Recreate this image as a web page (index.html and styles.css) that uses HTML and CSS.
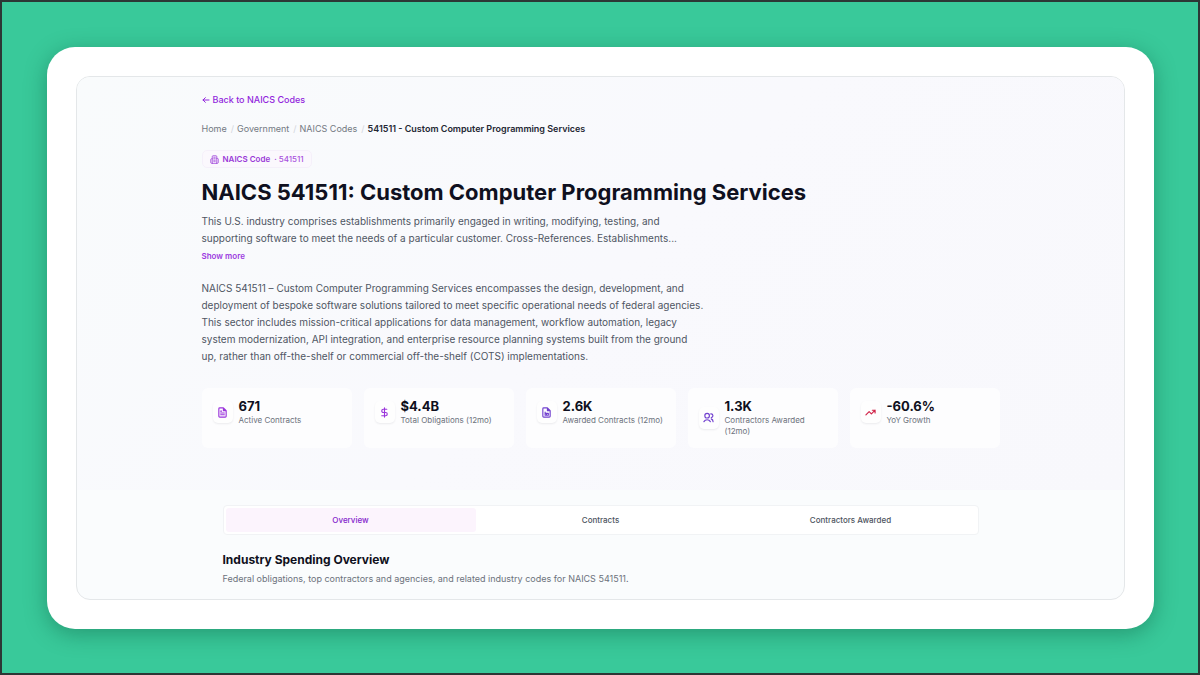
FILE: index.html
```html
<!DOCTYPE html>
<html lang="en">
<head>
<meta charset="utf-8">
<meta name="viewport" content="width=device-width, initial-scale=1">
<title>NAICS 541511: Custom Computer Programming Services</title>
<link rel="stylesheet" href="styles.css">
</head>
<body>
<div class="frame">
  <div class="panel">
    <header class="hero">
      <div class="container">
        <a class="back" href="#codes"><svg class="back-icon" viewBox="0 0 24 24"><path d="M10 5l-7 7 7 7M3 12h18"/></svg>Back to NAICS Codes</a>
        <nav class="crumbs" aria-label="Breadcrumb">
          <a href="#home">Home</a><span class="sep">/</span><a href="#government">Government</a><span class="sep">/</span><a href="#codes">NAICS Codes</a><span class="sep">/</span><span class="current">541511 - Custom Computer Programming Services</span>
        </nav>
        <div class="badge">
          <svg class="badge-icon" viewBox="0 0 24 24"><path d="M6 22V4a2 2 0 0 1 2-2h8a2 2 0 0 1 2 2v18ZM6 10H4a2 2 0 0 0-2 2v8a2 2 0 0 0 2 2h2M18 9h2a2 2 0 0 1 2 2v9a2 2 0 0 1-2 2h-2M10 6h4M10 10h4M10 14h4M10 18h4"/></svg>
          <span>NAICS Code</span><span class="badge-code">· 541511</span>
        </div>
        <h1 class="title">NAICS 541511: Custom Computer Programming Services</h1>
        <p class="text">This U.S. industry comprises establishments primarily engaged in writing, modifying, testing, and supporting software to meet the needs of a particular customer. Cross-References. Establishments...</p>
        <button class="more" type="button">Show more</button>
        <p class="text detail">NAICS 541511 – Custom Computer Programming Services encompasses the design, development, and deployment of bespoke software solutions tailored to meet specific operational needs of federal agencies. This sector includes mission-critical applications for data management, workflow automation, legacy system modernization, API integration, and enterprise resource planning systems built from the ground up, rather than off-the-shelf or commercial off-the-shelf (COTS) implementations.</p>
        <div class="stats">
          <div class="stat">
            <span class="stat-icon"><svg viewBox="0 0 24 24"><path d="M14 2H6a2 2 0 0 0-2 2v16a2 2 0 0 0 2 2h12a2 2 0 0 0 2-2V8ZM14 2v6h6M8 13h8M8 17h8M8 9h2"/></svg></span>
            <div><div class="value">671</div><div class="label">Active Contracts</div></div>
          </div>
          <div class="stat">
            <span class="stat-icon"><svg viewBox="0 0 24 24"><path d="M12 2v20M17 5H9.500a3.500 3.500 0 0 0 0 7h5a3.500 3.500 0 0 1 0 7H6"/></svg></span>
            <div><div class="value">$4.4B</div><div class="label">Total Obligations (12mo)</div></div>
          </div>
          <div class="stat">
            <span class="stat-icon violet"><svg viewBox="0 0 24 24"><path d="M14 2H6a2 2 0 0 0-2 2v16a2 2 0 0 0 2 2h12a2 2 0 0 0 2-2V8ZM14 2v6h6M9 11v7h7v-4H9M12 14v4"/></svg></span>
            <div><div class="value">2.6K</div><div class="label">Awarded Contracts (12mo)</div></div>
          </div>
          <div class="stat">
            <span class="stat-icon violet"><svg viewBox="0 0 24 24"><circle cx="9" cy="8" r="5"/><path d="M2 21a8 8 0 0 1 14 0M17 4a4 4 0 0 1 1 8M18 15c2 1 4 3 4 6"/></svg></span>
            <div><div class="value">1.3K</div><div class="label">Contractors Awarded (12mo)</div></div>
          </div>
          <div class="stat">
            <span class="stat-icon red"><svg viewBox="0 0 24 24"><path d="M22 7l-8 8-5-5-7 7M16 7h6v6"/></svg></span>
            <div><div class="value">-60.6%</div><div class="label">YoY Growth</div></div>
          </div>
        </div>
      </div>
    </header>
    <main class="content">
      <div class="tabs" role="tablist">
        <button class="tab active" type="button" role="tab" aria-selected="true">Overview</button>
        <button class="tab" type="button" role="tab" aria-selected="false">Contracts</button>
        <button class="tab" type="button" role="tab" aria-selected="false">Contractors Awarded</button>
      </div>
      <h2 class="section-title">Industry Spending Overview</h2>
      <p class="section-text">Federal obligations, top contractors and agencies, and related industry codes for NAICS 541511.</p>
    </main>
  </div>
</div>
</body>
</html>
```
FILE: styles.css
```css
* { box-sizing: border-box; }
body {
  margin: 0;
  min-height: 100vh;
  padding: 45px 44px 44px 45px;
  border: 2px solid #2c3735;
  background: #39c99a;
  font-family: Inter, "Liberation Sans", sans-serif;
  color: #0f1020;
  display: flex;
}
h1, h2, p { margin: 0; }
a { color: inherit; text-decoration: none; }
button { font: inherit; border: 0; background: none; padding: 0; }
svg { fill: none; stroke: currentColor; stroke-width: 2; stroke-linecap: round; stroke-linejoin: round; }
.frame {
  flex: 1;
  display: flex;
  padding: 29px;
  border-radius: 28px;
  background: #fff;
  box-shadow: 0 5px 22px rgba(10, 80, 55, 0.4);
}
.panel {
  flex: 1;
  border: 1px solid #e4e7e9;
  border-radius: 14px;
  background: #fafcfd;
  overflow: hidden;
}
.hero {
  padding: 17px 24px 42px;
  background: linear-gradient(135deg, #f9fbfc, #f9f9fd 50%, #f8f8fc);
}
.container { max-width: 798px; margin: 0 auto; }
.back {
  display: flex;
  align-items: center;
  gap: 3px;
  width: fit-content;
  font-size: 9px;
  line-height: 12px;
  font-weight: 500;
  color: #9226dc;
}
.back-icon { width: 8px; height: 8px; stroke-width: 3; }
.crumbs {
  display: flex;
  gap: 3px;
  margin-top: 17px;
  font-size: 9px;
  line-height: 12px;
  color: #737982;
}
.sep { padding-left: 1px; color: #d3d6dc; }
.current { font-weight: 600; color: #242733; }
.badge {
  display: flex;
  align-items: center;
  gap: 4px;
  width: fit-content;
  margin-top: 15px;
  padding: 2px 7px;
  border: 1px solid #f5f0fa;
  border-radius: 5px;
  background: #fbf8fd;
  font-size: 8px;
  line-height: 12px;
  font-weight: 600;
  color: #9a38d8;
}
.badge-icon { width: 9px; height: 9px; }
.badge-code { font-weight: 500; color: #a950dd; }
.title {
  margin-top: 9px;
  font-size: 22px;
  line-height: 30px;
  font-weight: 700;
}
.text {
  max-width: 503px;
  margin-top: 6px;
  font-size: 10px;
  line-height: 17px;
  color: #4f5663;
}
.more {
  display: block;
  margin-top: 3px;
  font-size: 8px;
  line-height: 12px;
  font-weight: 600;
  color: #9c3be0;
}
.detail { margin-top: 18px; }
.stats {
  display: grid;
  grid-template-columns: repeat(5, 1fr);
  gap: 12px;
  margin-top: 23px;
}
.stat {
  display: grid;
  grid-template-columns: auto 1fr;
  gap: 6px;
  align-items: center;
  align-content: start;
  min-height: 60px;
  padding: 10px 11px;
  border-radius: 6px;
  background: #fdfdfe;
}
.stat-icon {
  display: grid;
  place-items: center;
  width: 20px;
  height: 22px;
  border-radius: 5px;
  background: #fefefe;
  box-shadow: 0 1px 2px rgba(20, 20, 50, 0.08);
  color: #9a35db;
}
.stat-icon svg { width: 11px; height: 11px; stroke-width: 2.5; }
.violet { color: #7140cf; }
.red { color: #d02348; }
.value { font-size: 13px; line-height: 16px; font-weight: 700; }
.label { margin-top: 1px; font-size: 8px; line-height: 11px; color: #6c727c; }
.content { padding: 15px 24px 12px; max-width: 804px; margin: 0 auto; }
.tabs {
  display: grid;
  grid-template-columns: repeat(3, 1fr);
  border: 1px solid #f1f3f5;
  border-radius: 4px;
  background: #fff;
  padding: 2px;
}
.tab {
  padding: 6px;
  font-size: 8px;
  line-height: 12px;
  font-weight: 500;
  color: #4d535e;
}
.active { background: #fcf4fd; color: #8424cc; border-radius: 3px; }
.section-title { margin-top: 16px; font-size: 12px; line-height: 18px; font-weight: 700; }
.section-text { margin-top: 4px; font-size: 9px; line-height: 12px; color: #6c727c; }
```
